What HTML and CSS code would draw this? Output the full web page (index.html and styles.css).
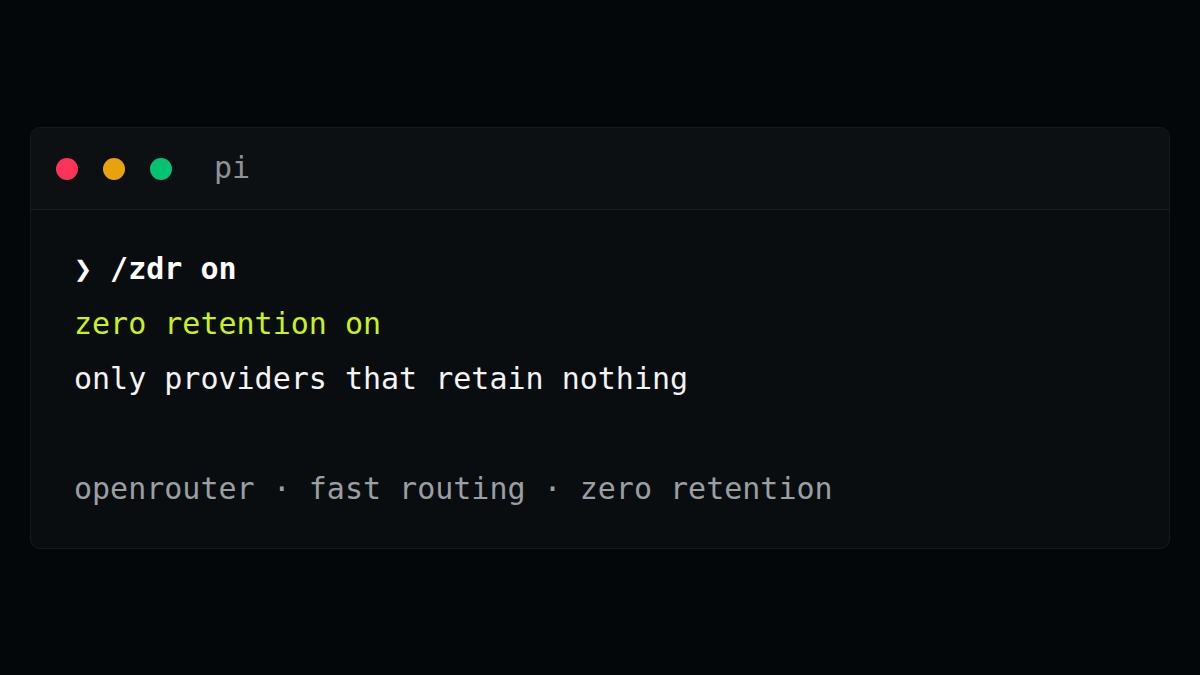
FILE: index.html
```html
<!DOCTYPE html>
<html>
<head>
<meta charset="utf-8">
<link rel="stylesheet" href="styles.css">
</head>
<body>
<div class="stage">
  <div class="term">
    <div class="bar">
      <span class="dot red"></span>
      <span class="dot amber"></span>
      <span class="dot green"></span>
      <span class="title">pi</span>
    </div>
    <div class="body">
      <div class="line cmd">❯ /zdr on</div>
      <div class="line ok">zero retention on</div>
      <div class="line">only providers that retain nothing</div>
      <div class="line blank">&nbsp;</div>
      <div class="line muted">openrouter · fast routing · zero retention</div>
    </div>
  </div>
</div>
</body>
</html>
```
FILE: styles.css
```css
html, body {
  margin: 0;
  padding: 0;
  background: #04070a;
}
.stage {
  width: 1200px;
  height: 675px;
  padding: 127px 30px 0;
  box-sizing: border-box;
}
.term {
  background: #0a0d10;
  border: 1px solid #161a1e;
  border-radius: 10px;
  overflow: hidden;
  font-family: "DejaVu Sans Mono", monospace;
}
.bar {
  height: 81px;
  background: #0d1013;
  border-bottom: 1px solid #1a1e22;
  display: flex;
  align-items: center;
  padding-left: 25px;
  gap: 25px;
}
.dot {
  width: 22px;
  height: 22px;
  border-radius: 50%;
  flex: none;
}
.red { background: #fe3358; }
.amber { background: #e8a20b; }
.green { background: #00c472; }
.title {
  margin-left: 17px;
  color: #8e9398;
  font-size: 30px;
  line-height: 1;
  padding-bottom: 2px;
}
.body {
  padding: 31px 43px 32px;
  font-size: 30px;
  line-height: 55px;
  color: #f2f4f5;
}
.line { white-space: pre; }
.cmd { font-weight: bold; color: #ffffff; }
.ok { color: #c8f21a; }
.muted { color: #9a9fa4; }
```
